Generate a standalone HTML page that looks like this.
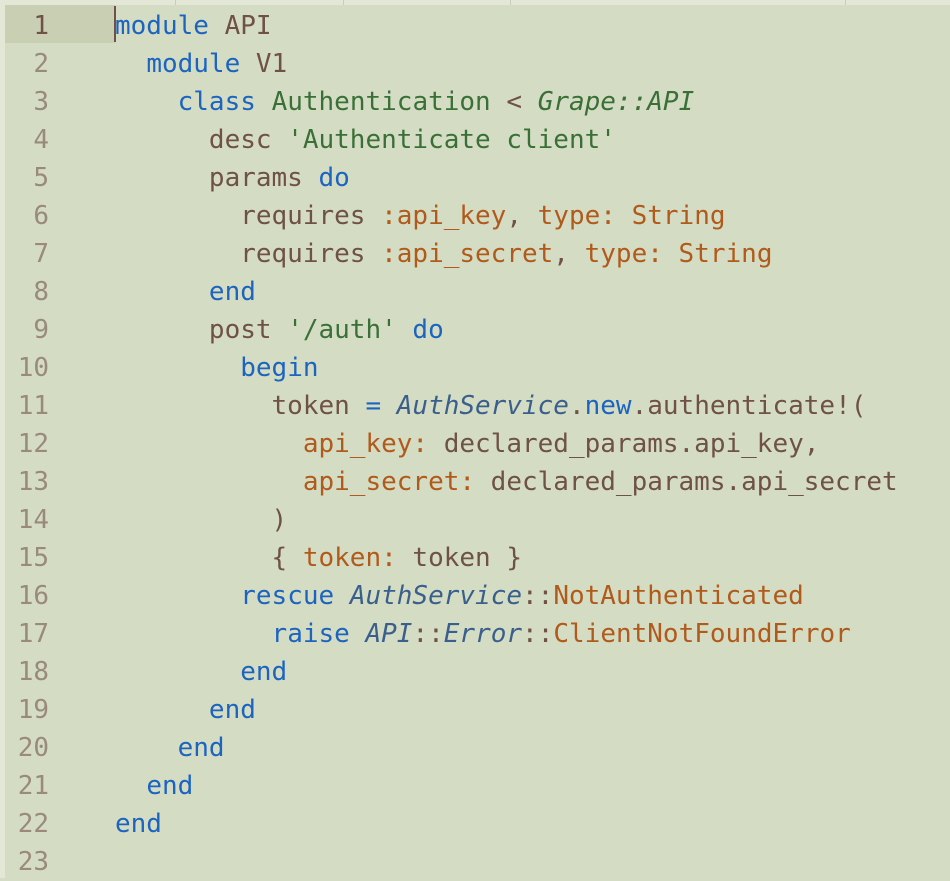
<!DOCTYPE html>
<html><head><meta charset="utf-8"><style>
body{margin:0;width:950px;height:878px;background:#d4ddc3;overflow:hidden;position:relative;font-family:"DejaVu Sans Mono","Liberation Mono",monospace;font-size:26px;}
.top{position:absolute;left:0;top:0;width:950px;height:5px;background:#e2e7d6;}
.top i{position:absolute;top:0;width:1px;height:5px;background:#c8cfb8;}
.left{position:absolute;left:0;top:0;width:5px;height:878px;background:#e2e7d6;}
.hl{position:absolute;left:5px;top:5px;width:110px;height:38px;background:#c9cfb2;}
.cur{position:absolute;left:114px;top:6px;width:2px;height:36px;background:#6f5146;}
.g{position:absolute;left:5px;top:7px;width:44px;text-align:right;color:#998a7c;}
.g div,.c div{height:38px;line-height:38px;white-space:pre;}
.g div:first-child{color:#6f5146;}
.c{position:absolute;left:115px;top:7px;color:#6f5146;}
.k{color:#1c64c0}.s{color:#3a7038}.o{color:#b05a1c}.t{color:#3a5f8c;font-style:italic}
</style></head><body>
<div class="top"><i style="left:175px"></i><i style="left:343px"></i><i style="left:510px"></i><i style="left:845px"></i></div>
<div class="left"></div>
<div class="hl"></div>
<div class="g"><div>1</div><div>2</div><div>3</div><div>4</div><div>5</div><div>6</div><div>7</div><div>8</div><div>9</div><div>10</div><div>11</div><div>12</div><div>13</div><div>14</div><div>15</div><div>16</div><div>17</div><div>18</div><div>19</div><div>20</div><div>21</div><div>22</div><div>23</div></div>
<div class="c">
<div><span class="k">module</span> API</div>
<div>  <span class="k">module</span> V1</div>
<div>    <span class="k">class</span> <span class="s">Authentication</span> &lt; <span class="s" style="font-style:italic">Grape::API</span></div>
<div>      desc <span class="s">'Authenticate client'</span></div>
<div>      params <span class="k">do</span></div>
<div>        requires <span class="o">:api_key</span>, <span class="o">type:</span> <span class="o">String</span></div>
<div>        requires <span class="o">:api_secret</span>, <span class="o">type:</span> <span class="o">String</span></div>
<div>      <span class="k">end</span></div>
<div>      post <span class="s">'/auth'</span> <span class="k">do</span></div>
<div>        <span class="k">begin</span></div>
<div>          token <span class="k">=</span> <span class="t">AuthService</span>.<span class="k">new</span>.authenticate!(</div>
<div>            <span class="o">api_key:</span> declared_params.api_key,</div>
<div>            <span class="o">api_secret:</span> declared_params.api_secret</div>
<div>          )</div>
<div>          { <span class="o">token:</span> token }</div>
<div>        <span class="k">rescue</span> <span class="t">AuthService</span>::<span class="o">NotAuthenticated</span></div>
<div>          <span class="k">raise</span> <span class="t">API</span>::<span class="t">Error</span>::<span class="o">ClientNotFoundError</span></div>
<div>        <span class="k">end</span></div>
<div>      <span class="k">end</span></div>
<div>    <span class="k">end</span></div>
<div>  <span class="k">end</span></div>
<div><span class="k">end</span></div>
<div></div>
</div>
<div class="cur"></div>
</body></html>
